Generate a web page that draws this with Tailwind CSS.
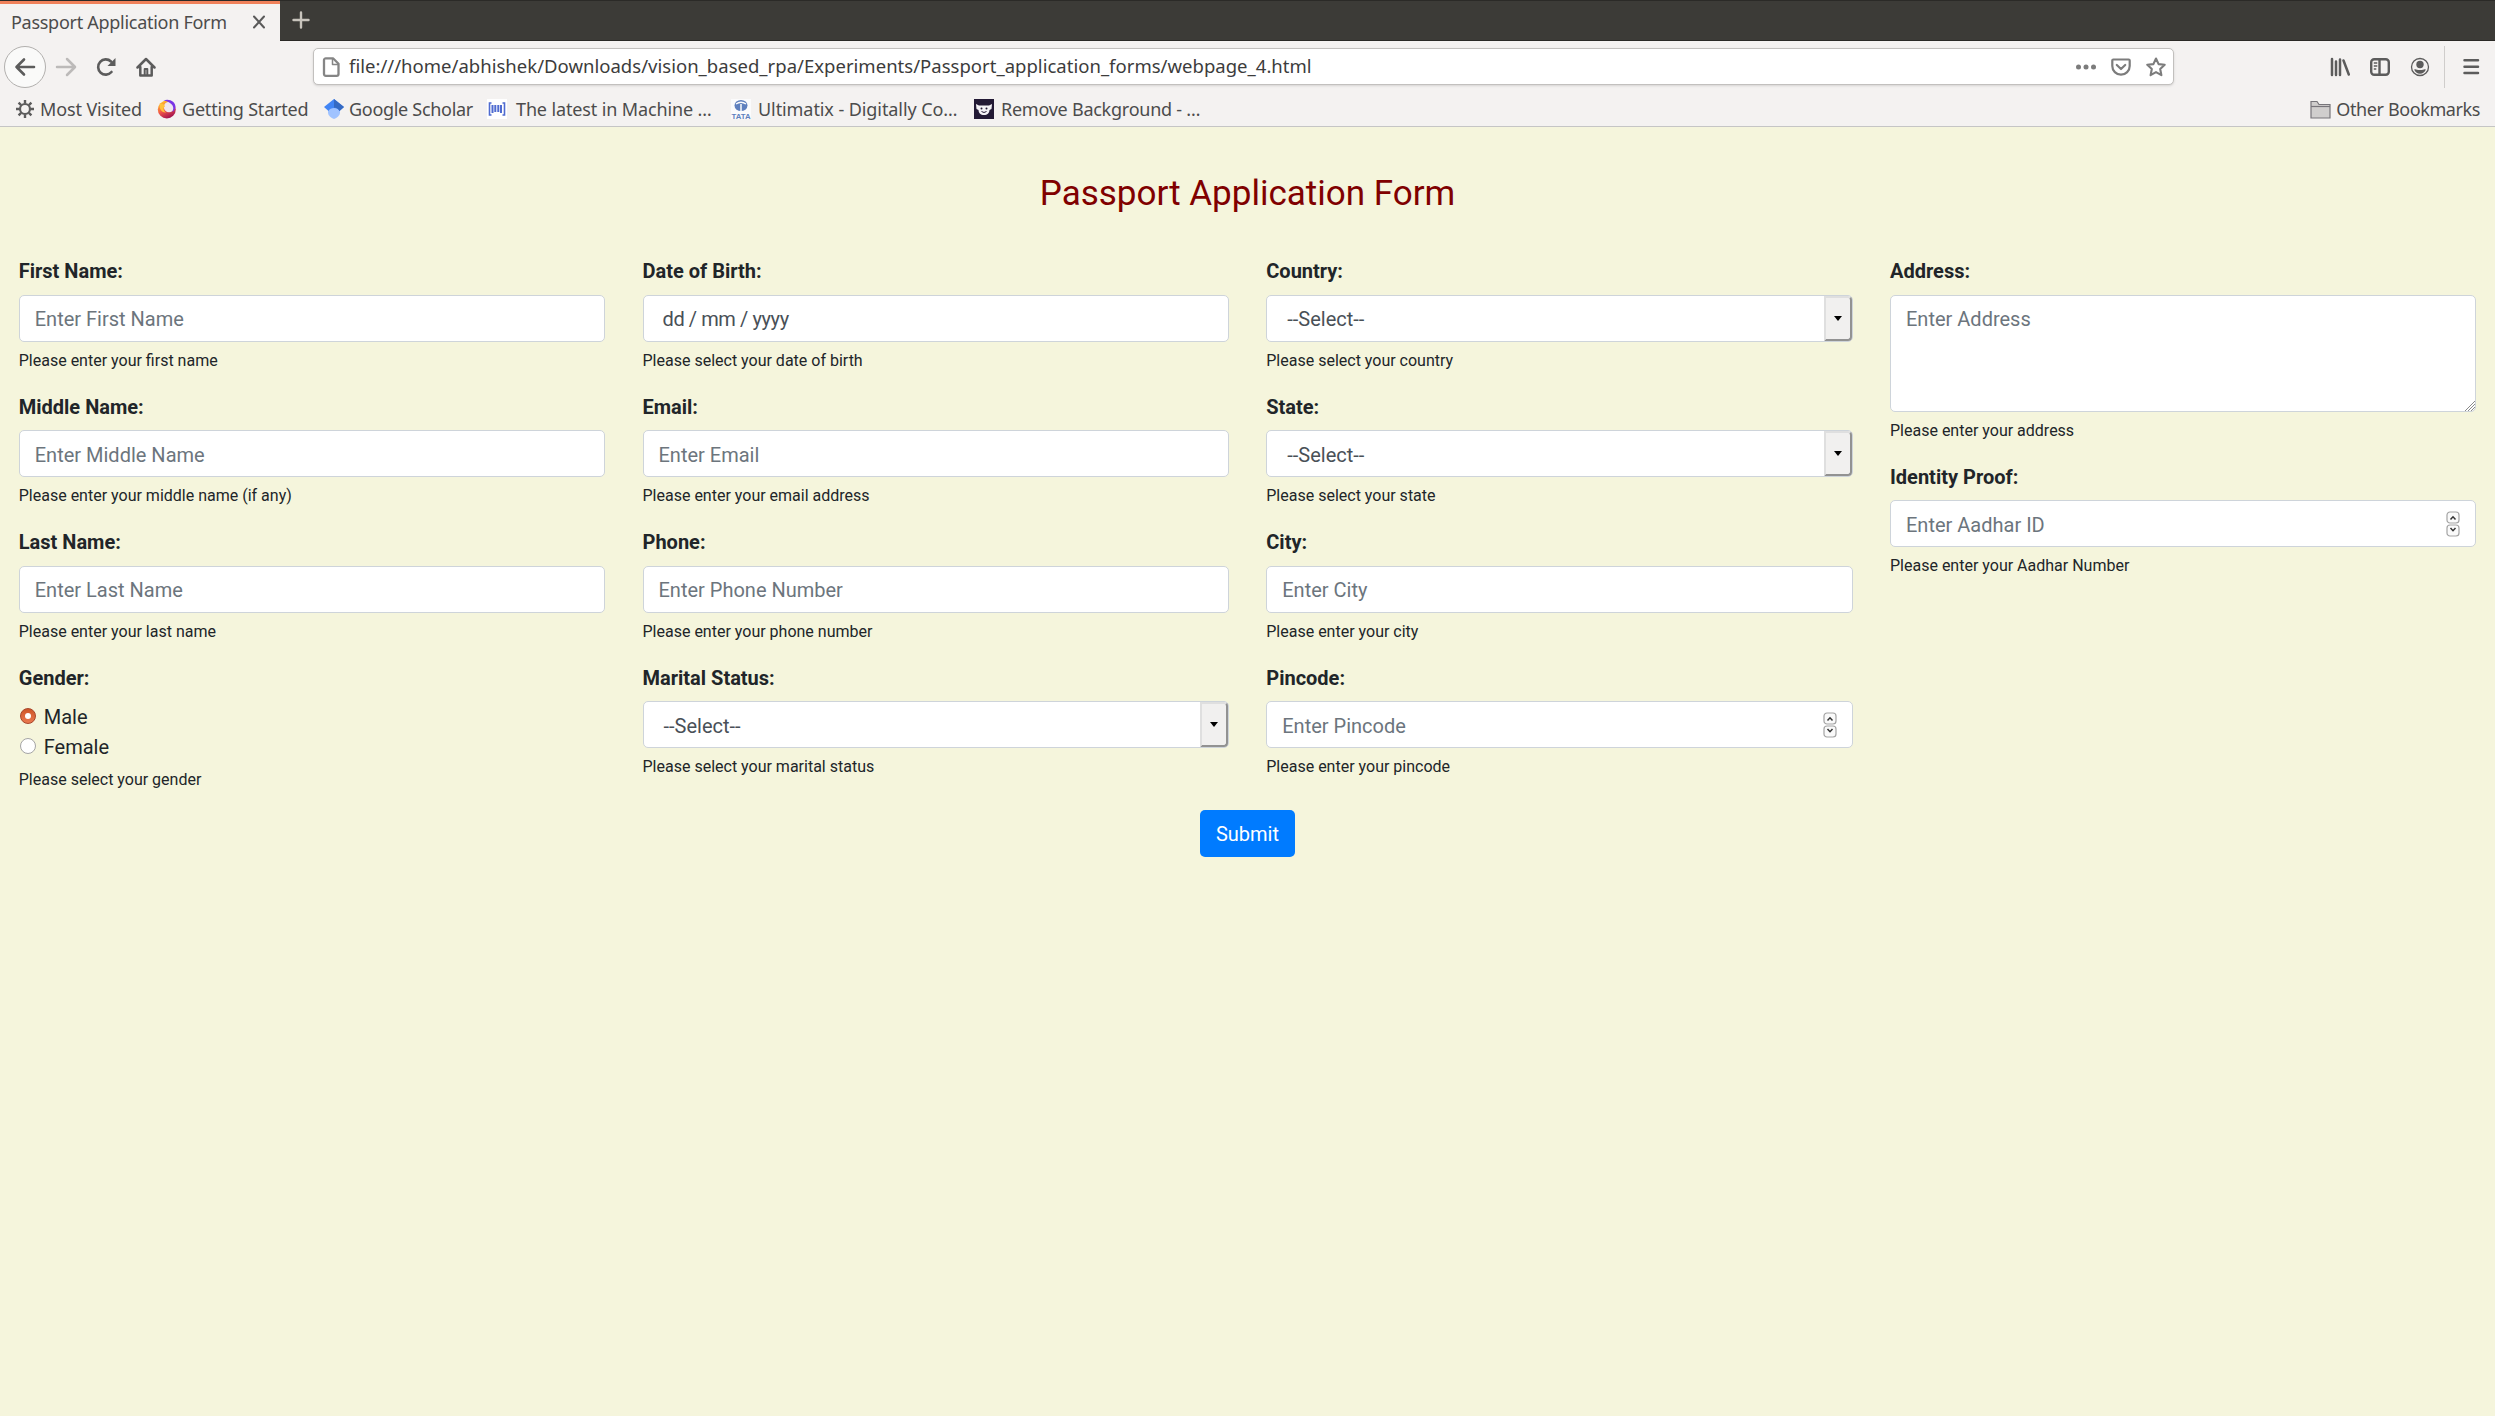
<!DOCTYPE html>
<html lang="en">
<head>
<meta charset="utf-8">
<title>Passport Application Form</title>
<script src="https://cdn.jsdelivr.net/npm/@tailwindcss/browser@4"></script>
</head>
<body class="h-[1416px] w-[2495px] overflow-hidden bg-[#f5f5dc] font-['Roboto',sans-serif] text-[#212529]">
<!-- Browser chrome -->
<header class="flex h-[127px] flex-col border-b border-[#c5c5c5] bg-[#f4f2f1] font-['Noto_Sans',sans-serif] text-[18px] text-[#4c4c4c]">
  <div class="flex h-[41px] shrink-0 border-t border-[#2b2a27] bg-[#3c3b37]">
    <div class="flex h-[40px] w-[280px] items-center justify-between border-t-3 border-[#f0815a] bg-[#f4f2f1] pr-[13px] pb-px pl-[11px]">
      <span class="whitespace-nowrap tracking-[-0.28px]">Passport Application Form</span>
      <svg class="size-4" viewBox="0 0 16 16" stroke="#5a5a5a" stroke-width="2" stroke-linecap="round"><path d="M3 2.500l10 11M13 2.500l-10 11"/></svg>
    </div>
    <div class="flex flex-1 items-center border-b border-[#2a2926] pb-px pl-3">
      <svg class="size-[18px]" viewBox="0 0 18 18" stroke="#c8c4bc" stroke-width="2.400" stroke-linecap="round"><path d="M9 1.500v15M1.500 9h15"/></svg>
    </div>
  </div>
  <div class="flex h-[51px] shrink-0 items-center">
    <div class="ml-1 flex size-[42px] items-center justify-center rounded-full border border-[#b2b0ae] bg-[#fafaf9]">
      <svg class="size-[22px]" viewBox="0 0 22 22" fill="none" stroke="#5c5c5c" stroke-width="2.600" stroke-linecap="round" stroke-linejoin="round"><path d="M20 11H2.500M10 3.500L2.500 11l7.500 7.500"/></svg>
    </div>
    <svg class="ml-[9px] size-[22px]" viewBox="0 0 22 22" fill="none" stroke="#bcbab9" stroke-width="2.500" stroke-linecap="round" stroke-linejoin="round"><path d="M2 11h17.500M12 3l8 8-8 8"/></svg>
    <svg class="ml-[19px] size-[20px]" viewBox="0 0 20 20" fill="none" stroke="#5c5c5c" stroke-width="2.600"><path d="M15.500 15A7.600 7.600 0 1 1 15 4.500" stroke-linecap="round"/><path d="M19.500 1v8h-8z" fill="#5c5c5c" stroke="none"/></svg>
    <svg class="ml-[20px] size-[20px]" viewBox="0 0 20 20" fill="none" stroke="#5c5c5c" stroke-width="2.500" stroke-linecap="round" stroke-linejoin="round"><path d="M1.500 10.500L10 2l8.500 8.500M4.300 10v8.500h11.400V10"/><path d="M8.700 18v-6h2.600v6" stroke-width="2"/></svg>
    <div class="ml-[157px] flex h-[37px] w-[1861px] items-center rounded-[5px] border border-[#c2c0be] bg-white pl-[8px] shadow-sm">
      <svg class="h-[20px] w-[18px]" viewBox="0 0 18 20" fill="none" stroke="#858585" stroke-width="2.300" stroke-linejoin="round"><path d="M4 1.300h7l5.500 5.500V17a1.800 1.800 0 0 1-1.800 1.800H4A1.800 1.800 0 0 1 2 17V3.100A1.800 1.800 0 0 1 4 1.300z"/><path d="M10.500 1.500v6h6" stroke-width="1.500"/></svg>
      <span class="ml-[9px] pb-[2px] whitespace-nowrap text-[18.500px] tracking-[0.020px] text-[#3c3c3c]">file:///home/abhishek/Downloads/vision_based_rpa/Experiments/Passport_application_forms/webpage_4.html</span>
      <svg class="mr-[15px] ml-auto h-[20px] w-[20px]" viewBox="0 0 20 20" fill="#7c7c7c"><circle cx="2.500" cy="10" r="2.500"/><circle cx="10" cy="10" r="2.500"/><circle cx="17.500" cy="10" r="2.500"/></svg>
      <svg class="mr-[15px] size-[20px]" viewBox="0 0 20 20" fill="none" stroke="#7c7c7c" stroke-width="2.200" stroke-linecap="round" stroke-linejoin="round"><path d="M2.300 2.500h15.400a1 1 0 0 1 1 1v5.500a8.700 8.700 0 0 1-17.400 0V3.500a1 1 0 0 1 1-1z"/><path d="M5.800 8L10 12l4.200-4"/></svg>
      <svg class="mr-[7px] size-[20px]" viewBox="0 0 20 20" fill="none" stroke="#7c7c7c" stroke-width="2.100" stroke-linejoin="round"><path d="M10 1.500l2.600 5.600 6.100.7-4.500 4.200 1.200 6.200L10 15.100l-5.400 3.100L5.800 12 1.300 7.800l6.100-.7z"/></svg>
    </div>
    <svg class="ml-[156px] size-[20px]" viewBox="0 0 20 20" stroke="#5c5c5c" stroke-width="2.500" stroke-linecap="round"><path d="M2 2v16M6 4.500V18M10 2.500V18M13.500 3.500L18.800 17.500"/></svg>
    <svg class="ml-[20px] size-[20px]" viewBox="0 0 20 20" fill="none" stroke="#5c5c5c" stroke-width="2.400"><rect x="1.200" y="2.200" width="17.600" height="15.600" rx="3"/><path d="M9.500 2v16"/><path d="M3.800 6h3.500M3.800 9h3.500M3.800 12h2.500" stroke-width="1.400"/></svg>
    <svg class="ml-[20px] size-[20px]" viewBox="0 0 20 20"><circle cx="10" cy="10" r="8.500" fill="none" stroke="#5c5c5c" stroke-width="1.300"/><circle cx="10" cy="7.500" r="3.700" fill="#5c5c5c"/><path d="M4.200 12.500c1.500-1 2.500.5 5.800.5s4.300-1.500 5.800-.5c-.8 2.700-3 4.200-5.800 4.200s-5-1.500-5.800-4.200z" fill="#5c5c5c"/></svg>
    <div class="ml-[14px] h-[42px] w-px bg-[#cfcdcb]"></div>
    <svg class="ml-[17px] size-[18px]" viewBox="0 0 18 18" stroke="#5c5c5c" stroke-width="2.500" stroke-linecap="round"><path d="M2.500 2.300h13.500M2.500 8.700h13.500M2.500 15h13.500"/></svg>
  </div>
  <div class="flex h-[34px] shrink-0 items-center whitespace-nowrap tracking-[-0.200px]">
    <svg class="ml-[16px] size-[18px]" viewBox="0 0 18 18" fill="none" stroke="#5c5c5c"><circle cx="9" cy="9" r="5" stroke-width="2.200"/><path stroke-width="2.400" d="M9 0v3.500M9 14.500V18M0 9h3.500M14.500 9H18M2.600 2.600l2.500 2.500M12.900 12.900l2.500 2.500M2.600 15.400l2.500-2.500M12.900 5.100l2.500-2.500"/></svg>
    <span class="ml-[6px] w-[102px] tracking-[-0.120px]">Most Visited</span>
    <svg class="ml-[15px] size-[20px]" viewBox="0 0 20 20"><defs><linearGradient id="fx" x1="0.100" y1="0.200" x2="0.500" y2="1"><stop offset="0" stop-color="#ffb02e"/><stop offset=".5" stop-color="#f0554a"/><stop offset="1" stop-color="#a8174f"/></linearGradient></defs><circle cx="9.800" cy="10.500" r="9" fill="url(#fx)"/><circle cx="12" cy="8" r="5.200" fill="#efe6ef"/><path d="M6.500 1.500C13-1 19.500 3.500 18.300 9c-.5 2-1.800 3.500-3 4 2.500-5 .5-9.500-8.800-11.500z" fill="#7a35e6"/><path d="M3 4.500c3 0 4.500 1 5 3-2 1-2 4 1 6-4 .5-7.500-4-6-9z" fill="#ffc23d"/></svg>
    <span class="ml-[5px] w-[127px]">Getting Started</span>
    <svg class="ml-[15px] size-[20px]" viewBox="0 0 20 20"><path d="M4 9h12v4.500c0 3-3 5.500-6 6.500-3-1-6-3.500-6-6.500z" fill="#a0c3ff"/><path d="M10 0L0 8l4.500 4C6 8 14 8 15.500 12L20 8z" fill="#4285f4"/><path d="M10 0l10 8-4.500 4C14 9 12 8.700 10 8.700z" fill="#356ac3"/></svg>
    <span class="ml-[5px] w-[123px] tracking-[-0.300px]">Google Scholar</span>
    <svg class="ml-[15px] size-[20px]" viewBox="0 0 20 20" fill="none" stroke="#4f6bd0" stroke-width="1.600"><path d="M0 0h20v20H0z" fill="#fff" stroke="none"/><path d="M4.500 4H2.500v12h2M15.500 4h2v12h-2"/><path d="M5.500 6v8M8.300 6v7M11.300 6v7M14 6v8" stroke-width="2"/></svg>
    <span class="ml-[9px] w-[195px] tracking-[-0.130px]">The latest in Machine …</span>
    <svg class="ml-[20px] size-[20px]" viewBox="0 0 20 20"><path d="M0 0h20v20H0z" fill="#fbfbfc"/><ellipse cx="10" cy="6.500" rx="6.500" ry="5.500" fill="#5f80be"/><path d="M10 12V5M5 5c3-2 7-2 10 0" stroke="#fbfbfc" stroke-width="1.500" fill="none"/><text x="0.500" y="19.500" font-size="8" font-weight="700" textLength="19" lengthAdjust="spacingAndGlyphs" class="tracking-normal" font-family="Liberation Sans" fill="#5f80be">TATA</text></svg>
    <span class="ml-[7px] w-[199px] tracking-[-0.080px]">Ultimatix - Digitally Co…</span>
    <svg class="ml-[17px] size-[20px]" viewBox="0 0 20 20"><path d="M0 0h20v20H0z" fill="#231a35"/><path d="M2 5l3 1.500h10L18 5l-.5 5-2 1c-.3 3.500-2 5-5.500 5s-5.200-1.500-5.500-5l-2-1z" fill="#f4f2f6"/><circle cx="7.500" cy="9.500" r="1" fill="#231a35"/><circle cx="12.500" cy="9.500" r="1" fill="#231a35"/><path d="M7.500 12.500q2.500 2 5 0" stroke="#231a35" fill="none"/></svg>
    <span class="ml-[7px] tracking-[-0.250px]">Remove Background - …</span>
    <svg class="mr-[5px] ml-auto h-[19px] w-[21px]" viewBox="0 0 21 19" fill="#d0cecd" stroke="#77757a" stroke-width="1.200"><path d="M1 18V1.500h6l2 3h11V18z"/><path d="M1 6.500h19"/></svg>
    <span class="mr-[15px] tracking-[-0.400px]">Other Bookmarks</span>
  </div>
</header>

<!-- Form -->
<main class="pt-[43px]">
  <h1 class="text-center text-[35px] leading-[48px] text-[#800000]">Passport Application Form</h1>
  <form id="form" class="mt-[38px] grid grid-cols-4 text-[20px] leading-[30px]"></form>
  <div class="-mt-px flex justify-center"><button type="button" class="h-[47px] w-[95px] rounded-[5px] bg-[#007bff] text-[20px] text-white">Submit</button></div>
</main>
<script>
const spin = `<svg class="ml-auto h-[26px] w-[14px]" viewBox="0 0 14 26" fill="#fafafa" stroke="#a3a3a3" stroke-width="1.200"><rect x="1" y="1" width="12" height="11" rx="3"/><rect x="1" y="14" width="12" height="11" rx="3"/><path d="M4.500 8.500L7 5.800l2.500 2.700M4.500 17l2.500 2.700L9.500 17" fill="none" stroke="#333" stroke-width="1.500"/></svg>`;
const arrow = `<span class="ml-auto flex h-full w-[28px] items-center justify-center rounded-r-[4px] border-2 border-t-[#dfdfdf] border-r-[#929292] border-b-[#929292] border-l-[#dfdfdf] bg-[#f1f0ef]"><svg class="h-[5px] w-[8px]" viewBox="0 0 8 5"><path d="M0 0h8L4 5z"/></svg></span>`;
const grip = `<svg class="absolute right-0 bottom-0 size-[10px]" viewBox="0 0 10 10" stroke="#8a8a8a" stroke-width="1"><path d="M0 10L10 0M3 10l7-7M6 10l4-4"/></svg>`;
const cols = [
 [["First Name:","Enter First Name","Please enter your first name"],["Middle Name:","Enter Middle Name","Please enter your middle name (if any)"],["Last Name:","Enter Last Name","Please enter your last name"],["Gender:","","Please select your gender","radio"]],
 [["Date of Birth:","dd / mm / yyyy","Please select your date of birth","date"],["Email:","Enter Email","Please enter your email address"],["Phone:","Enter Phone Number","Please enter your phone number"],["Marital Status:","--Select--","Please select your marital status","select"]],
 [["Country:","--Select--","Please select your country","select"],["State:","--Select--","Please select your state","select"],["City:","Enter City","Please enter your city"],["Pincode:","Enter Pincode","Please enter your pincode","number"]],
 [["Address:","Enter Address","Please enter your address","area"],["Identity Proof:","Enter Aadhar ID","Please enter your Aadhar Number","number"]]
];
const box = "relative flex rounded-[5px] border border-[#ced4da] bg-white";
function control([, text, , kind]) {
  const label = `<span class="pt-[2px]">${text}</span>`;
  if (kind === "radio") return `<div class="h-[60px] pt-px">
    <label class="flex h-[30px] items-center pl-px"><span class="mb-[2px] flex size-4 items-center justify-center rounded-full border border-[#a8452a] bg-linear-to-b from-[#cf5527] to-[#ea7a50]"><span class="size-[6px] rounded-full bg-white"></span></span><span class="ml-2">Male</span></label>
    <label class="flex h-[30px] items-center pl-px"><span class="mb-[2px] size-4 rounded-full border border-[#a5a5a5] bg-white"></span><span class="ml-2">Female</span></label></div>`;
  if (kind === "area") return `<div class="${box} h-[117px] pt-[6px] pl-[15px] text-[#6c757d]">${label}${grip}</div>`;
  if (kind === "select") return `<div class="${box} h-[47px] items-center pl-[20px] text-[#495057]">${label}${arrow}</div>`;
  if (kind === "date") return `<div class="${box} h-[47px] items-center pl-[19px] tracking-[-0.400px] text-[#495057]">${label}</div>`;
  return `<div class="${box} h-[47px] items-center pr-[15px] pl-[15px] text-[#6c757d]">${label}${kind === "number" ? spin : ""}</div>`;
}
document.getElementById("form").innerHTML = cols.map(c => `<section class="px-[18.750px]">${c.map(f => `<div class="mb-[18.500px]"><div class="mb-[8.500px] font-bold">${f[0]}</div>${control(f)}<div class="mt-[7px] text-[16px] leading-[24.500px]">${f[2]}</div></div>`).join("")}</section>`).join("");
</script>
</body>
</html>
